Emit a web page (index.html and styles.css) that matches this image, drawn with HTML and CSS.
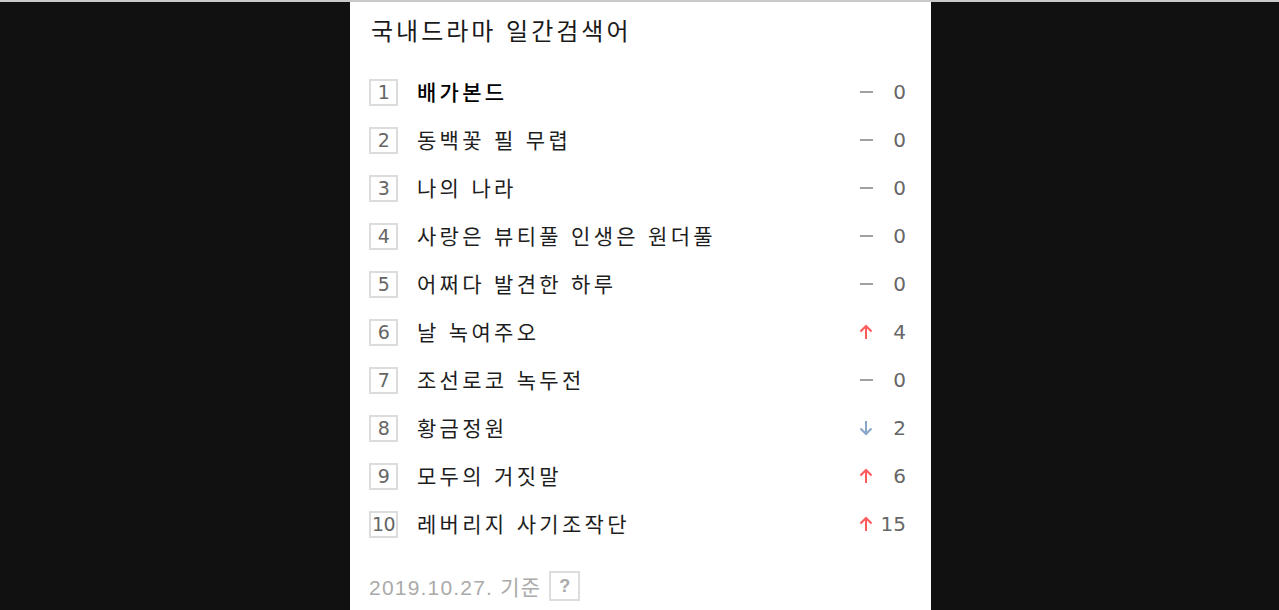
FILE: index.html
```html
<!DOCTYPE html>
<html lang="ko">
<head>
<meta charset="utf-8">
<link rel="stylesheet" href="styles.css">
</head>
<body>
<div class="topline"></div>
<div class="panel">
  <h2 class="title">국내드라마 일간검색어</h2>
  <ol class="list">
    <li class="row"><span class="rank">1</span><span class="name strong">배가본드</span><span class="chg"><span class="ico same"></span><span class="num">0</span></span></li>
    <li class="row"><span class="rank">2</span><span class="name">동백꽃 필 무렵</span><span class="chg"><span class="ico same"></span><span class="num">0</span></span></li>
    <li class="row"><span class="rank">3</span><span class="name">나의 나라</span><span class="chg"><span class="ico same"></span><span class="num">0</span></span></li>
    <li class="row"><span class="rank">4</span><span class="name">사랑은 뷰티풀 인생은 원더풀</span><span class="chg"><span class="ico same"></span><span class="num">0</span></span></li>
    <li class="row"><span class="rank">5</span><span class="name">어쩌다 발견한 하루</span><span class="chg"><span class="ico same"></span><span class="num">0</span></span></li>
    <li class="row"><span class="rank">6</span><span class="name">날 녹여주오</span><span class="chg"><svg class="ico up" viewBox="0 0 14 16"><path d="M7 15V2M1.5 7.5L7 2l5.5 5.5" fill="none" stroke="#ff5b5b" stroke-width="2"/></svg><span class="num">4</span></span></li>
    <li class="row"><span class="rank">7</span><span class="name">조선로코 녹두전</span><span class="chg"><span class="ico same"></span><span class="num">0</span></span></li>
    <li class="row"><span class="rank">8</span><span class="name">황금정원</span><span class="chg"><svg class="ico down" viewBox="0 0 14 16"><path d="M7 1v13M1.5 8.5L7 14l5.5-5.5" fill="none" stroke="#86a6c8" stroke-width="2"/></svg><span class="num">2</span></span></li>
    <li class="row"><span class="rank">9</span><span class="name">모두의 거짓말</span><span class="chg"><svg class="ico up" viewBox="0 0 14 16"><path d="M7 15V2M1.5 7.5L7 2l5.5 5.5" fill="none" stroke="#ff5b5b" stroke-width="2"/></svg><span class="num">6</span></span></li>
    <li class="row"><span class="rank">10</span><span class="name">레버리지 사기조작단</span><span class="chg"><svg class="ico up" viewBox="0 0 14 16"><path d="M7 15V2M1.5 7.5L7 2l5.5 5.5" fill="none" stroke="#ff5b5b" stroke-width="2"/></svg><span class="num">15</span></span></li>
  </ol>
  <div class="foot"><span class="date">2019.10.27. 기준</span><span class="help">?</span></div>
</div>
</body>
</html>
```
FILE: styles.css
```css
html, body {
  margin: 0;
  padding: 0;
  background: #111111;
  height: 100%;
  overflow: hidden;
}
.topline {
  height: 2px;
  background: #c9c9c9;
}
.panel {
  margin-left: 350px;
  width: 581px;
  height: 620px;
  background: #ffffff;
  box-sizing: border-box;
  padding: 0 25px 0 19px;
  font-family: "Noto Sans CJK KR", "Noto Sans", sans-serif;
}
.title {
  margin: 0;
  height: 66px;
  box-sizing: border-box;
  padding: 9px 0 0 2px;
  font-size: 24px;
  font-weight: 400;
  line-height: 38px;
  color: #1a1a1a;
  letter-spacing: 3px;
}
.list {
  list-style: none;
  margin: 0;
  padding: 0;
}
.row {
  display: flex;
  align-items: center;
  height: 48px;
}
.rank {
  width: 25px;
  height: 23px;
  border: 2px solid #dcdcdc;
  box-sizing: content-box;
  display: flex;
  align-items: center;
  justify-content: center;
  font-family: "DejaVu Sans", sans-serif;
  font-size: 19px;
  color: #666666;
  margin-right: 19px;
  letter-spacing: -0.5px;
}
.name {
  flex: 1;
  font-size: 21px;
  color: #1e1e1e;
  letter-spacing: 3.3px;
  line-height: 26px;
  padding-bottom: 2px;
}
.name.strong {
  font-weight: 500;
  color: #000;
}
.chg {
  display: flex;
  align-items: center;
}
.ico {
  width: 14px;
  height: 16px;
  display: block;
}
.ico.same {
  height: 2px;
  width: 13px;
  background: #a0a0a0;
}
.num {
  width: 33px;
  text-align: right;
  font-family: "DejaVu Sans", sans-serif;
  font-size: 20px;
  color: #666666;
}
.foot {
  display: flex;
  align-items: center;
  height: 62px;
  padding: 14px 0 0 0;
  box-sizing: border-box;
}
.date {
  font-family: "Liberation Sans", "Noto Sans CJK KR", sans-serif;
  font-size: 21px;
  color: #aaaaaa;
  letter-spacing: 1.2px;
}
.help {
  margin-left: 8px;
  width: 27px;
  height: 26px;
  border: 2px solid #dddddd;
  display: flex;
  align-items: center;
  justify-content: center;
  font-family: "Liberation Sans", sans-serif;
  font-weight: 700;
  font-size: 18px;
  color: #aaaaaa;
}
```
